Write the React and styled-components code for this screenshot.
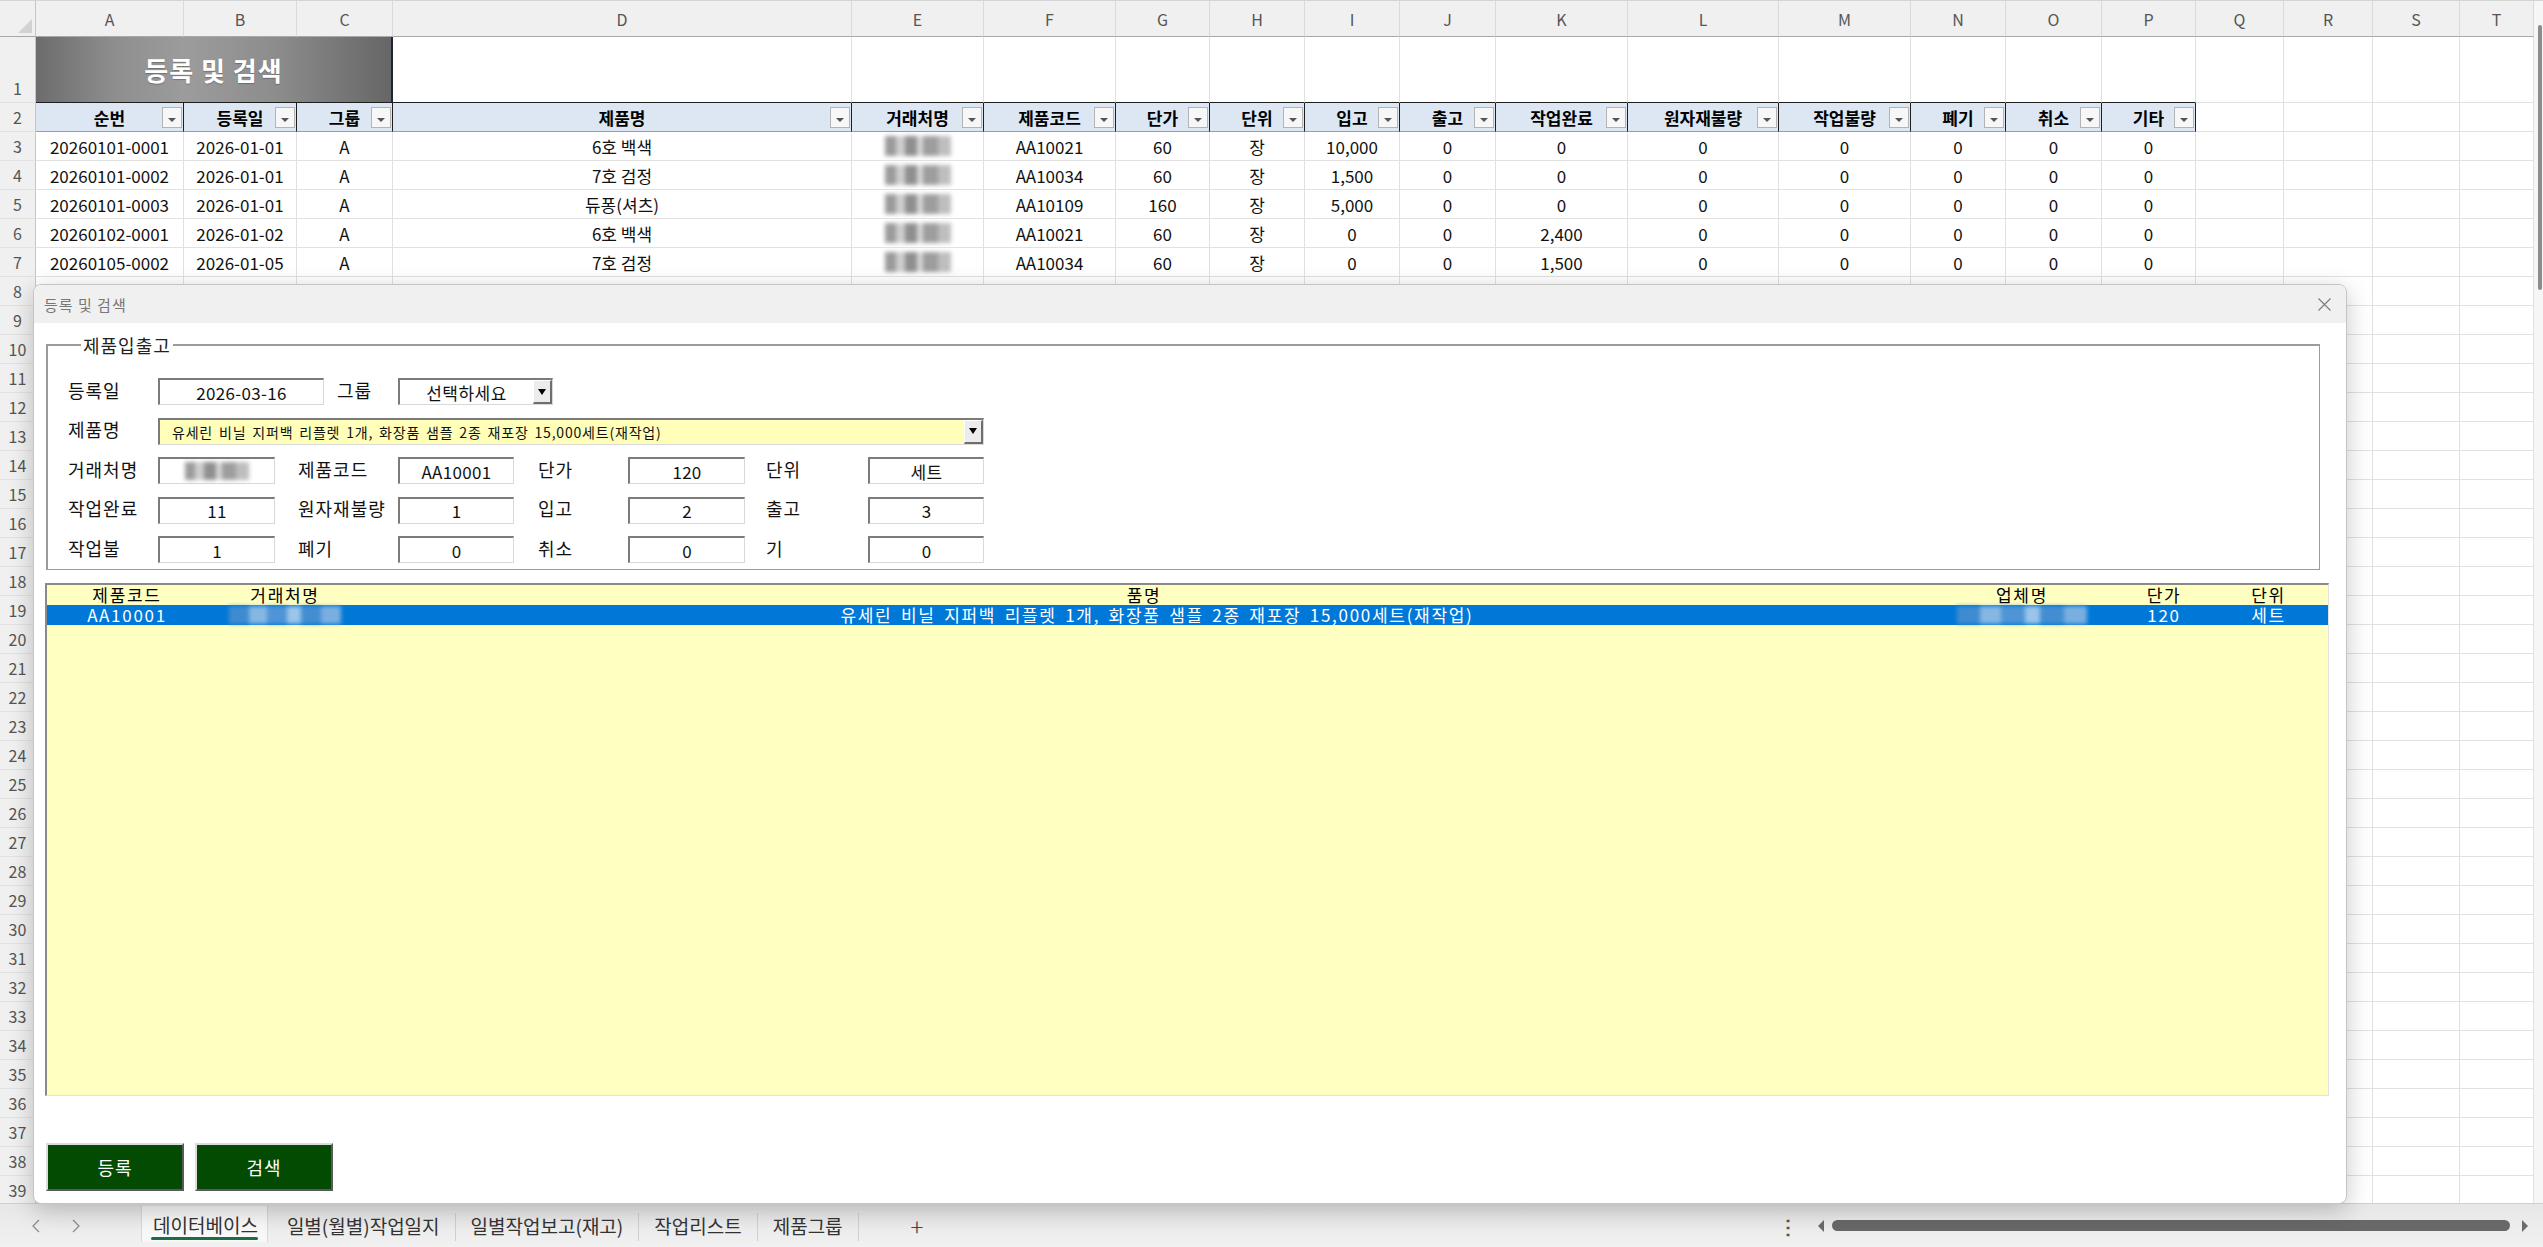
import React from 'react';
import styled, { createGlobalStyle } from 'styled-components';

const GlobalStyle = createGlobalStyle`
  html, body {
    margin: 0;
    padding: 0;
  }
  body {
    width: 2543px;
    height: 1247px;
    overflow: hidden;
    background: #fff;
    font-family: "Noto Sans CJK KR", "Noto Sans", sans-serif;
  }
  * { box-sizing: border-box; }
`;

// sheet column widths: row numbers, then A..T
const COLS = [36, 148, 113, 96, 459, 132, 132, 94, 95, 95, 96, 132, 151, 132, 95, 96, 94, 88, 89, 87, 74];
const TEMPLATE = COLS.map((c) => `${c}px`).join(' ');
const LETTERS = 'ABCDEFGHIJKLMNOPQRST'.split('');

const HEADERS = ['순번', '등록일', '그룹', '제품명', '거래처명', '제품코드', '단가', '단위', '입고', '출고', '작업완료', '원자재불량', '작업불량', '폐기', '취소', '기타'];

const DATA = [
  ['20260101-0001', '2026-01-01', 'A', '6호 백색', null, 'AA10021', '60', '장', '10,000', '0', '0', '0', '0', '0', '0', '0'],
  ['20260101-0002', '2026-01-01', 'A', '7호 검정', null, 'AA10034', '60', '장', '1,500', '0', '0', '0', '0', '0', '0', '0'],
  ['20260101-0003', '2026-01-01', 'A', '듀퐁(셔츠)', null, 'AA10109', '160', '장', '5,000', '0', '0', '0', '0', '0', '0', '0'],
  ['20260102-0001', '2026-01-02', 'A', '6호 백색', null, 'AA10021', '60', '장', '0', '0', '2,400', '0', '0', '0', '0', '0'],
  ['20260105-0002', '2026-01-05', 'A', '7호 검정', null, 'AA10034', '60', '장', '0', '0', '1,500', '0', '0', '0', '0', '0'],
];

const EMPTY_ROWS = Array.from({ length: 32 }, (_, i) => i + 8);

/* ---------- window / sheet ---------- */

const Window = styled.div`
  width: 2543px;
  height: 1247px;
  display: flex;
  flex-direction: column;
  position: relative;
  overflow: hidden;
  border-top: 1px solid #d4d4d4;
`;

const SheetArea = styled.div`
  flex: 1;
  min-height: 0;
  display: flex;
  overflow: hidden;
`;

const Grid = styled.div`
  width: 2534px;
  display: flex;
  flex-direction: column;
`;

const VScroll = styled.div`
  width: 9px;
  background: #f6f6f6;
  padding: 24px 1px 0 4px;
`;

const VThumb = styled.div`
  width: 4px;
  height: 265px;
  border-radius: 2px;
  background: #8c8c8c;
`;

const Row = styled.div`
  display: grid;
  grid-template-columns: ${TEMPLATE};
  height: ${(p) => p.$h}px;
  flex: none;
`;

const Corner = styled.div`
  background: #f0f0f0;
  border-right: 1px solid #c6c6c6;
  border-bottom: 1px solid #a8a8a8;
  display: flex;
  align-items: flex-end;
  justify-content: flex-end;
  padding: 0 3px 3px 0;
`;

const CornerTri = styled.span`
  width: 0;
  height: 0;
  border-left: 14px solid transparent;
  border-bottom: 14px solid #d2d2d2;
`;

const ColHead = styled.div`
  background: #f0f0f0;
  border-right: 1px solid #dadada;
  border-bottom: 1px solid #a8a8a8;
  color: #555;
  font-size: 16px;
  display: flex;
  align-items: center;
  justify-content: center;
`;

const RowNum = styled.div`
  background: #f0f0f0;
  border-right: 1px solid #c6c6c6;
  border-bottom: 1px solid #e2e2e2;
  color: #555;
  font-size: 16px;
  display: flex;
  align-items: ${(p) => (p.$bottom ? 'flex-end' : 'center')};
  padding-bottom: ${(p) => (p.$bottom ? '2px' : '0')};
  justify-content: center;
`;

const Cell = styled.div`
  background: #fff;
  border-right: 1px solid #e1e1e1;
  border-bottom: 1px solid ${(p) => (p.$dark ? '#1e1e1e' : '#e1e1e1')};
  display: flex;
  align-items: center;
  justify-content: center;
  font-size: 17px;
  color: #111;
  white-space: nowrap;
  overflow: hidden;
`;

const TitleCell = styled.div`
  grid-column: span 3;
  background: linear-gradient(90deg, #6c6c6c 0%, #8e8e8e 22%, #9c9c9c 42%, #8c8c8c 68%, #666 100%);
  border-right: 2px solid #1d2538;
  border-bottom: 1px solid #1e1e1e;
  color: #fff;
  font-size: 26px;
  font-weight: 700;
  letter-spacing: 1px;
  display: flex;
  align-items: center;
  justify-content: center;
  text-shadow: 0 1px 1px rgba(0, 0, 0, 0.25);
`;

const HeadCell = styled.div`
  position: relative;
  background: #dde7f3;
  border-right: 1px solid #1e1e1e;
  border-bottom: 1px solid #9c9c9c;
  display: flex;
  align-items: center;
  justify-content: center;
  font-size: 17px;
  font-weight: 700;
  color: #000;
`;

const FilterBtn = styled.span`
  position: absolute;
  right: 1px;
  top: 4px;
  width: 20px;
  height: 21px;
  border: 1px solid #b4b4b4;
  background: #f7f7f7;
  display: flex;
  align-items: center;
  justify-content: center;

  &::after {
    content: '';
    border-left: 4px solid transparent;
    border-right: 4px solid transparent;
    border-top: 4px solid #555;
    margin-top: 4px;
  }
`;

const Mosaic = styled.span`
  display: inline-block;
  width: ${(p) => p.$w || 66}px;
  height: ${(p) => p.$h || 20}px;
  background: ${(p) =>
    p.$blue
      ? 'linear-gradient(90deg, #4a8fd0 0 18%, #9ec3e6 18% 34%, #5d9ad6 34% 52%, #b7d3ee 52% 64%, #4f92d2 64% 82%, #8fb8e2 82%)'
      : 'linear-gradient(90deg, #8a8a8a 0 16%, #c6c6c6 16% 30%, #7c7c7c 30% 48%, #cfcfcf 48% 58%, #8d8d8d 58% 80%, #b3b3b3 80%)'};
  filter: blur(2px);
  opacity: 0.85;
`;

/* ---------- dialog ---------- */

const Dialog = styled.div`
  position: absolute;
  left: 33px;
  top: 283px;
  width: 2314px;
  height: 920px;
  background: #fff;
  border: 1px solid #c4c4c4;
  border-radius: 8px;
  box-shadow: 0 6px 24px rgba(0, 0, 0, 0.22);
  display: flex;
  flex-direction: column;
  overflow: hidden;
`;

const TitleBar = styled.div`
  height: 38px;
  flex: none;
  background: #f0f0f0;
  display: flex;
  align-items: center;
  justify-content: space-between;
  padding: 0 15px 0 10px;
`;

const DlgTitle = styled.span`
  font-size: 15px;
  color: #777;
  letter-spacing: 1px;
`;

const DlgBody = styled.div`
  flex: 1;
  display: flex;
  flex-direction: column;
  padding: 9px 17px 12px 11px;
  font-size: 18px;
  letter-spacing: 1px;
  color: #111;
`;

const Frame = styled.fieldset`
  margin: 0 9px 0 1px;
  padding: 20px 0 6px 20px;
  border: 1px solid #9b9b9b;
  border-top-width: 2px;
  border-left-width: 2px;
  display: flex;
  flex-direction: column;
  gap: 12.5px;
`;

const Caption = styled.legend`
  margin-left: 13px;
  padding: 0 2px;
  font-size: 18px;
  color: #222;
`;

const FormRow = styled.div`
  display: flex;
  align-items: center;
  height: 27px;
`;

const Label = styled.span`
  width: ${(p) => p.$w}px;
  padding-left: ${(p) => p.$pl || 0}px;
  flex: none;
  white-space: nowrap;
  margin-top: -4px;
`;

const TextBox = styled.div`
  width: ${(p) => p.$w}px;
  height: 27px;
  flex: none;
  border-top: 2px solid #7b7b7b;
  border-left: 2px solid #7b7b7b;
  border-right: 1px solid #d9d9d9;
  border-bottom: 1px solid #d9d9d9;
  background: #fff;
  display: flex;
  align-items: center;
  justify-content: center;
  font-size: 17px;
  letter-spacing: 0.3px;
`;

const Combo = styled.div`
  width: ${(p) => p.$w}px;
  height: 27px;
  flex: none;
  display: flex;
  border-top: 2px solid #7b7b7b;
  border-left: 2px solid #7b7b7b;
  border-right: 1px solid #d9d9d9;
  border-bottom: 1px solid #d9d9d9;
  background: ${(p) => p.$bg || '#fff'};
`;

const ComboText = styled.span`
  flex: 1;
  display: flex;
  align-items: center;
  justify-content: ${(p) => (p.$center ? 'center' : 'flex-start')};
  padding-left: ${(p) => (p.$center ? 0 : 12)}px;
  font-size: ${(p) => (p.$small ? 14 : 17)}px;
  letter-spacing: ${(p) => (p.$small ? 0.8 : 0.5)}px;
  word-spacing: ${(p) => (p.$small ? 2 : 0)}px;
  white-space: nowrap;
  overflow: hidden;
`;

const DropBtn = styled.span`
  width: 19px;
  flex: none;
  background: #ececec;
  border-top: 1px solid #fff;
  border-left: 1px solid #fff;
  border-right: 2px solid #6e6e6e;
  border-bottom: 2px solid #6e6e6e;
  display: flex;
  align-items: center;
  justify-content: center;

  &::after {
    content: '';
    border-left: 4px solid transparent;
    border-right: 4px solid transparent;
    border-top: 6px solid #000;
  }
`;

const ListBox = styled.div`
  margin-top: 13px;
  height: 513px;
  flex: none;
  background: #ffffc2;
  border-top: 2px solid #8a8a8a;
  border-left: 2px solid #8a8a8a;
  border-right: 1px solid #e2e2e2;
  border-bottom: 1px solid #e2e2e2;
  font-size: 17px;
  letter-spacing: 1.7px;
  word-spacing: 3px;
`;

const ListLine = styled.div`
  display: grid;
  grid-template-columns: 160px 156px 1562px 194px 90px 1fr;
  height: 20px;
  background: ${(p) => (p.$selected ? '#0078d7' : 'transparent')};
  color: ${(p) => (p.$selected ? '#fff' : '#000')};
`;

const LCell = styled.span`
  display: flex;
  align-items: center;
  justify-content: center;
  line-height: 20px;
  white-space: nowrap;
  padding-left: ${(p) => p.$shift || 0}px;
`;

const ButtonRow = styled.div`
  margin-top: auto;
  display: flex;
  gap: 11px;
  padding-left: 1px;
`;

const GreenButton = styled.button`
  width: 138px;
  height: 48px;
  background: #034b03;
  color: #fff;
  font-family: inherit;
  font-size: 18px;
  letter-spacing: 1px;
  border: 2px solid;
  border-color: #dcdcdc #5a5a5a #5a5a5a #dcdcdc;
  padding: 0;
`;

/* ---------- sheet tabs ---------- */

const TabBar = styled.div`
  height: 44px;
  flex: none;
  display: flex;
  align-items: stretch;
  background: linear-gradient(#e7e7e7, #f1f1f1);
  border-top: 1px solid #d0d0d0;
  color: #333;
  font-size: 19px;
`;

const NavArrows = styled.div`
  width: 141px;
  flex: none;
  display: flex;
  align-items: center;
  gap: 32px;
  padding-left: 32px;
`;

const Tab = styled.div`
  position: relative;
  display: flex;
  align-items: center;
  padding: ${(p) => (p.$active ? '0 9px 0 11px' : '0 15px')};
  margin: ${(p) => (p.$active ? '2px 4px 5px 0' : '0')};
  background: ${(p) => (p.$active ? '#f8f8f8' : 'transparent')};
  border-left: ${(p) => (p.$active ? '1px solid #d8d8d8' : 'none')};
  border-right: ${(p) => (p.$active ? '1px solid #d8d8d8' : 'none')};
  white-space: nowrap;

  &::after {
    content: '';
    display: ${(p) => (p.$active ? 'block' : 'none')};
    position: absolute;
    left: 9px;
    right: 9px;
    bottom: 2px;
    height: 3px;
    border-radius: 2px;
    background: #1e6c43;
  }
`;

const Sep = styled.span`
  width: 1px;
  margin: 9px 0 6px;
  background: #cfcfcf;
`;

const AddTab = styled.span`
  display: flex;
  align-items: center;
  margin-left: 52px;
  font-size: 24px;
  color: #444;
  font-weight: 300;
`;

const RightTools = styled.div`
  margin-left: auto;
  margin-right: 15px;
  display: flex;
  align-items: center;
`;

const Dots = styled.span`
  font-size: 20px;
  color: #555;
  font-weight: 700;
  margin-right: 20px;
`;

const HScroll = styled.div`
  display: flex;
  align-items: center;
  gap: 4px;
`;

const ScrollArrow = styled.span`
  width: 0;
  height: 0;
  border-top: 6px solid transparent;
  border-bottom: 6px solid transparent;
  ${(p) => (p.$right ? 'border-left: 6px solid #6b6b6b;' : 'border-right: 6px solid #6b6b6b;')}
`;

const HThumb = styled.span`
  width: 678px;
  height: 11px;
  border-radius: 6px;
  background: #686868;
  margin: 0 8px 0 4px;
`;

const Chevron = ({ dir }) => (
  <svg width="8" height="14" viewBox="0 0 8 14">
    <path d={dir === 'left' ? 'M7 1L1 7L7 13' : 'M1 1L7 7L1 13'} fill="none" stroke="#8a8a8a" strokeWidth="1.2" />
  </svg>
);

const CloseIcon = () => (
  <svg width="13" height="13" viewBox="0 0 13 13">
    <path d="M0.5 0.5L12.5 12.5M12.5 0.5L0.5 12.5" stroke="#7a7a7a" strokeWidth="1.1" />
  </svg>
);

const GRID_ROWS = [
  [
    ['거래처명', 90, 0, null],
    ['제품코드', 123, 23, 'AA10001'],
    ['단가', 114, 24, '120'],
    ['단위', 123, 21, '세트'],
  ],
  [
    ['작업완료', 90, 0, '11'],
    ['원자재불량', 123, 23, '1'],
    ['입고', 114, 24, '2'],
    ['출고', 123, 21, '3'],
  ],
  [
    ['작업불', 90, 0, '1'],
    ['폐기', 123, 23, '0'],
    ['취소', 114, 24, '0'],
    ['기', 123, 21, '0'],
  ],
];
const BOX_W = [117, 116, 117, 116];

export default function App() {
  return (
    <>
      <GlobalStyle />
      <Window>
        <SheetArea>
          <Grid>
            <Row $h={36}>
              <Corner>
                <CornerTri />
              </Corner>
              {LETTERS.map((l) => (
                <ColHead key={l}>{l}</ColHead>
              ))}
            </Row>
            <Row $h={66}>
              <RowNum $bottom>1</RowNum>
              <TitleCell>등록 및 검색</TitleCell>
              {LETTERS.slice(3).map((l, i) => (
                <Cell key={l} $dark={i < 13} />
              ))}
            </Row>
            <Row $h={29}>
              <RowNum>2</RowNum>
              {HEADERS.map((h) => (
                <HeadCell key={h}>
                  {h}
                  <FilterBtn />
                </HeadCell>
              ))}
              {LETTERS.slice(16).map((l) => (
                <Cell key={l} />
              ))}
            </Row>
            {DATA.map((r, ri) => (
              <Row $h={29} key={ri}>
                <RowNum>{ri + 3}</RowNum>
                {r.map((v, ci) => (
                  <Cell key={ci}>{v === null ? <Mosaic /> : v}</Cell>
                ))}
                {LETTERS.slice(16).map((l) => (
                  <Cell key={l} />
                ))}
              </Row>
            ))}
            {EMPTY_ROWS.map((n) => (
              <Row $h={29} key={n}>
                <RowNum>{n}</RowNum>
                {LETTERS.map((l) => (
                  <Cell key={l} />
                ))}
              </Row>
            ))}
          </Grid>
          <VScroll>
            <VThumb />
          </VScroll>
        </SheetArea>

        <TabBar>
          <NavArrows>
            <Chevron dir="left" />
            <Chevron dir="right" />
          </NavArrows>
          <Tab $active>데이터베이스</Tab>
          <Tab>일별(월별)작업일지</Tab>
          <Sep />
          <Tab>일별작업보고(재고)</Tab>
          <Sep />
          <Tab>작업리스트</Tab>
          <Sep />
          <Tab>제품그룹</Tab>
          <Sep />
          <AddTab>+</AddTab>
          <RightTools>
            <Dots>⋮</Dots>
            <HScroll>
              <ScrollArrow />
              <HThumb />
              <ScrollArrow $right />
            </HScroll>
          </RightTools>
        </TabBar>

        <Dialog>
          <TitleBar>
            <DlgTitle>등록 및 검색</DlgTitle>
            <CloseIcon />
          </TitleBar>
          <DlgBody>
            <Frame>
              <Caption>제품입출고</Caption>
              <FormRow>
                <Label $w={90}>등록일</Label>
                <TextBox $w={166}>2026-03-16</TextBox>
                <Label $w={74} $pl={13}>
                  그룹
                </Label>
                <Combo $w={155}>
                  <ComboText $center>선택하세요</ComboText>
                  <DropBtn />
                </Combo>
              </FormRow>
              <FormRow>
                <Label $w={90}>제품명</Label>
                <Combo $w={826} $bg="#ffffb9">
                  <ComboText $small>유세린 비닐 지퍼백 리플렛 1개, 화장품 샘플 2종 재포장 15,000세트(재작업)</ComboText>
                  <DropBtn />
                </Combo>
              </FormRow>
              {GRID_ROWS.map((row, ri) => (
                <FormRow key={ri}>
                  {row.map(([label, w, pl, value], ci) => (
                    <React.Fragment key={label}>
                      <Label $w={w} $pl={pl}>
                        {label}
                      </Label>
                      <TextBox $w={BOX_W[ci]}>{value === null ? <Mosaic $w={64} $h={18} /> : value}</TextBox>
                    </React.Fragment>
                  ))}
                </FormRow>
              ))}
            </Frame>

            <ListBox>
              <ListLine>
                <LCell>제품코드</LCell>
                <LCell>거래처명</LCell>
                <LCell>품명</LCell>
                <LCell>업체명</LCell>
                <LCell>단가</LCell>
                <LCell>단위</LCell>
              </ListLine>
              <ListLine $selected>
                <LCell>AA10001</LCell>
                <LCell>
                  <Mosaic $blue $w={112} $h={18} />
                </LCell>
                <LCell $shift={26}>유세린 비닐 지퍼백 리플렛 1개, 화장품 샘플 2종 재포장 15,000세트(재작업)</LCell>
                <LCell>
                  <Mosaic $blue $w={130} $h={18} />
                </LCell>
                <LCell>120</LCell>
                <LCell>세트</LCell>
              </ListLine>
            </ListBox>

            <ButtonRow>
              <GreenButton>등록</GreenButton>
              <GreenButton>검색</GreenButton>
            </ButtonRow>
          </DlgBody>
        </Dialog>
      </Window>
    </>
  );
}
